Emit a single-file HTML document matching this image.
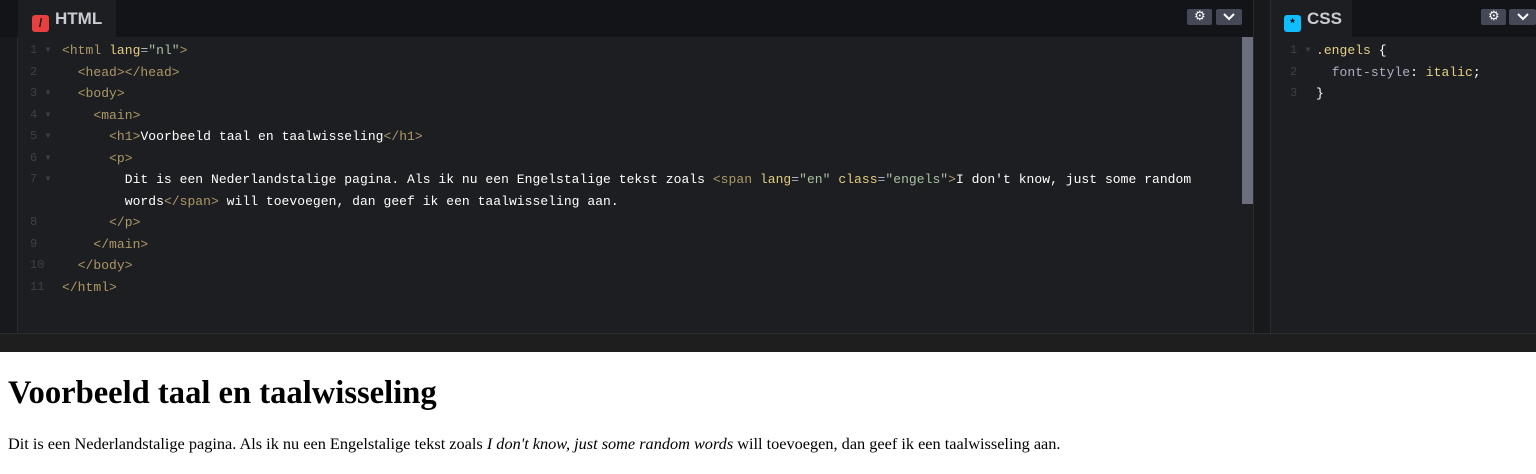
<!DOCTYPE html>
<html><head><meta charset="utf-8"><style>
*{margin:0;padding:0;box-sizing:border-box}
body{width:1536px;height:474px;background:#fff;overflow:hidden;position:relative;font-family:"Liberation Sans",sans-serif}
.top{position:absolute;left:0;top:0;width:1536px;height:352px;background:#131417}
.pane{position:absolute;top:0;height:333px;background:#1d1e22}
.bar{position:absolute;left:0;top:0;right:0;height:37px;background:#131417}
.tab{position:absolute;top:0;height:37px;background:#1d1e22;color:#c9ccd3;font-weight:bold;font-size:17px;line-height:37px;padding-left:14px}
.ico{display:inline-block;width:17px;height:17px;border-radius:3px;vertical-align:-3px;margin-right:6px;text-align:center;font-size:12px;line-height:17px;color:#131417}
.btn{position:absolute;top:9px;height:16px;background:#444857;border-radius:2px}
.code{position:absolute;font-family:"Liberation Mono",monospace;font-size:13px;letter-spacing:0.04px;color:#fff;white-space:pre;line-height:21.5px}
.ln{position:absolute;font-family:"Liberation Mono",monospace;font-size:12px;color:#3e4048;line-height:21.5px;white-space:pre}
.t{color:#ad9866}.a{color:#e3cd7e}.s{color:#a9c2a0}.p{color:#aab1c0}.y{color:#e6d083}
.bottom{position:absolute;left:0;top:333px;width:1536px;height:19px;background:#1e1e1e;border-top:1px solid #2c2d31}
h1{position:absolute;left:8px;top:375px;font-family:"Liberation Serif",serif;font-size:32.6px;font-weight:bold;color:#000}
p.o{position:absolute;left:8px;top:434px;font-family:"Liberation Serif",serif;font-size:16.3px;color:#000}
</style></head><body>
<div class="top">
 <div class="pane" style="left:0;width:1253px">
  <div class="bar"></div>
  <div class="tab" style="left:18px;width:98px"><span class="ico" style="background:#e8403f;color:#131417">/</span>HTML</div>
  <div class="btn" style="left:1187px;width:25px"><span style="position:absolute;left:7px;top:-1px;color:#fff;font-size:13px">⚙</span></div>
  <div class="btn" style="left:1216px;width:26px"><svg style="position:absolute;left:7px;top:4px" width="12" height="8"><path d="M1 1l5 5 5-5" stroke="#fff" stroke-width="2" fill="none"/></svg></div>
  <div style="position:absolute;left:0;top:37px;width:18px;height:296px;background:#18191c;border-right:1px solid #2a2b30"></div>
  <div style="position:absolute;left:1242px;top:37px;width:11px;height:167px;background:#6b6f7d"></div>
  <div class="ln" style="left:30px;top:40px">1 ▾
2
3 ▾
4 ▾
5 ▾
6 ▾
7 ▾

8
9
10
11</div>
  <div class="code" style="left:62px;top:40px"><span class="t">&lt;html</span> <span class="a">lang</span><span class="p">=</span><span class="s">"nl"</span><span class="t">&gt;</span>
  <span class="t">&lt;head&gt;&lt;/head&gt;</span>
  <span class="t">&lt;body&gt;</span>
    <span class="t">&lt;main&gt;</span>
      <span class="t">&lt;h1&gt;</span>Voorbeeld taal en taalwisseling<span class="t">&lt;/h1&gt;</span>
      <span class="t">&lt;p&gt;</span>
        Dit is een Nederlandstalige pagina. Als ik nu een Engelstalige tekst zoals <span class="t">&lt;span</span> <span class="a">lang</span><span class="p">=</span><span class="s">"en"</span> <span class="a">class</span><span class="p">=</span><span class="s">"engels"</span><span class="t">&gt;</span>I don't know, just some random
        words<span class="t">&lt;/span&gt;</span> will toevoegen, dan geef ik een taalwisseling aan.
      <span class="t">&lt;/p&gt;</span>
    <span class="t">&lt;/main&gt;</span>
  <span class="t">&lt;/body&gt;</span>
<span class="t">&lt;/html&gt;</span></div>
 </div>
 <div style="position:absolute;left:1253px;top:0;width:18px;height:333px;background:#18191b;border-left:1px solid #2a2b30;border-right:1px solid #2a2b30"></div>
 <div class="pane" style="left:1271px;width:265px">
  <div class="bar"></div>
  <div class="tab" style="left:0;width:81px;padding-left:13px"><span class="ico" style="background:#0ebeff">*</span>CSS</div>
  <div class="btn" style="left:210px;width:25px"><span style="position:absolute;left:7px;top:-1px;color:#fff;font-size:13px">⚙</span></div>
  <div class="btn" style="left:238px;width:27px"><svg style="position:absolute;left:8px;top:4px" width="12" height="8"><path d="M1 1l5 5 5-5" stroke="#fff" stroke-width="2" fill="none"/></svg></div>
  <div class="ln" style="left:19px;top:40px">1 ▾
2
3</div>
  <div class="code" style="left:45px;top:40px"><span class="y">.engels</span> {
  <span class="p">font-style</span>: <span class="y">italic</span>;
}</div>
 </div>
 <div class="bottom"></div>
</div>
<h1>Voorbeeld taal en taalwisseling</h1>
<p class="o">Dit is een Nederlandstalige pagina. Als ik nu een Engelstalige tekst zoals <i>I don't know, just some random words</i> will toevoegen, dan geef ik een taalwisseling aan.</p>
</body></html>
